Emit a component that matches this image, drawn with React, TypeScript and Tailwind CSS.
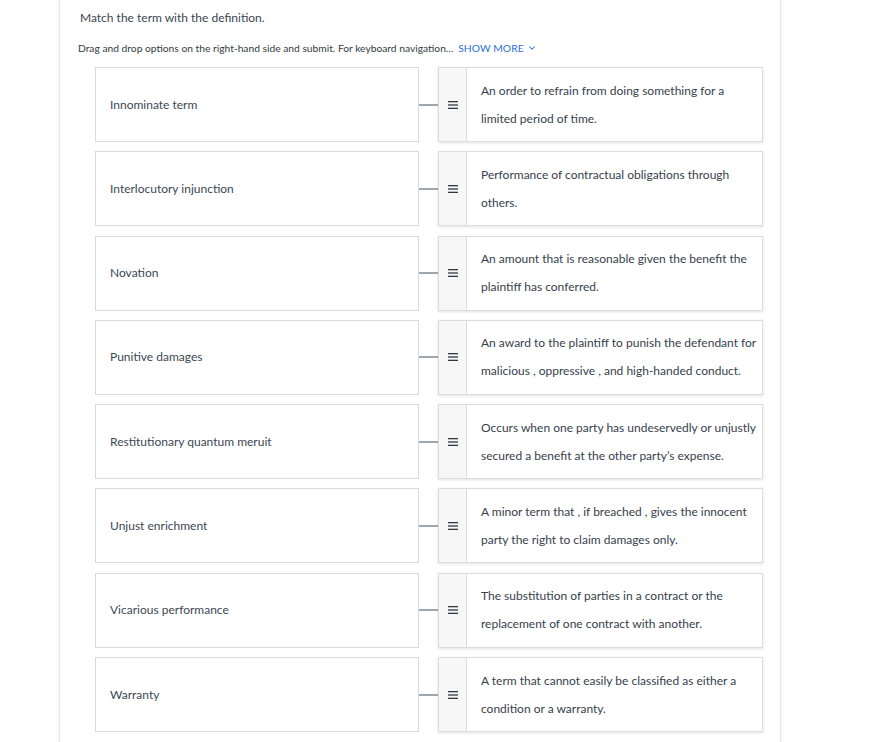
import { ChevronDown } from 'lucide-react';

type Row = { term: string; def: [string, string] };

const ROWS: Row[] = [
  { term: 'Innominate term', def: ['An order to refrain from doing something for a', 'limited period of time.'] },
  { term: 'Interlocutory injunction', def: ['Performance of contractual obligations through', 'others.'] },
  { term: 'Novation', def: ['An amount that is reasonable given the benefit the', 'plaintiff has conferred.'] },
  { term: 'Punitive damages', def: ['An award to the plaintiff to punish the defendant for', 'malicious\u00a0, oppressive\u00a0, and high-handed conduct.'] },
  { term: 'Restitutionary quantum meruit', def: ['Occurs when one party has undeservedly or unjustly', 'secured a benefit at the other party\u2019s expense.'] },
  { term: 'Unjust enrichment', def: ['A minor term that\u00a0, if breached\u00a0, gives the innocent', 'party the right to claim damages only.'] },
  { term: 'Vicarious performance', def: ['The substitution of parties in a contract or the', 'replacement of one contract with another.'] },
  { term: 'Warranty', def: ['A term that cannot easily be classified as either a', 'condition or a warranty.'] },
];

function Handle() {
  return (
    <svg width="10" height="8" viewBox="0 0 10 8" className="text-[#2e3a46]">
      <rect x="0" y="0" width="10" height="1.3" fill="currentColor" />
      <rect x="0" y="3.35" width="10" height="1.3" fill="currentColor" />
      <rect x="0" y="6.7" width="10" height="1.3" fill="currentColor" />
    </svg>
  );
}

export default function App() {
  return (
    <div className="w-[874px] h-[742px] bg-white overflow-hidden" style={{ fontFamily: 'Lato, "Open Sans", sans-serif' }}>
      <div className="ml-[59px] w-[722px] h-[742px] border-x border-[#e6e6e6] shadow-[0_0_4px_rgba(0,0,0,0.08)] bg-white">
        {/* Header */}
        <div className="pl-[20px] pt-[9px] text-[12px] leading-[17px] text-[#3a4550]">
          Match the term with the definition.
        </div>
        <div className="pl-[18px] mt-[15px] flex items-center text-[10.25px] leading-[14px] text-[#333b44]">
          <span>Drag and drop options on the right-hand side and submit. For keyboard navigation...</span>
          <span className="ml-[5px] text-[#2a6fdb] tracking-[0.1px]">SHOW MORE</span>
          <ChevronDown className="ml-[3px] w-[10px] h-[10px] text-[#2a6fdb]" strokeWidth={2.5} />
        </div>

        {/* Rows */}
        <div className="mt-[12px] flex flex-col gap-[9.3px] pl-[35px]">
          {ROWS.map((r) => (
            <div key={r.term} className="flex items-center h-[75px]">
              <div className="w-[324px] h-full border border-[#d8dadd] flex items-center pl-[14px] text-[12px] text-[#3c4753]">
                {r.term}
              </div>
              <div className="w-[19px] h-[2px] bg-[#9ba7b1]" />
              <div className="w-[325px] h-full flex bg-white border border-[#dcdde0] shadow-[0_1px_3px_rgba(0,0,0,0.12)]">
                <div className="w-[28px] shrink-0 bg-[#f7f7f8] border-r border-[#dcdde0] flex items-center justify-center">
                  <Handle />
                </div>
                <div className="flex flex-col justify-center pl-[14px] text-[12px] leading-[28px] text-[#36414c] whitespace-nowrap">
                  <span>{r.def[0]}</span>
                  <span>{r.def[1]}</span>
                </div>
              </div>
            </div>
          ))}
        </div>
      </div>
    </div>
  );
}
